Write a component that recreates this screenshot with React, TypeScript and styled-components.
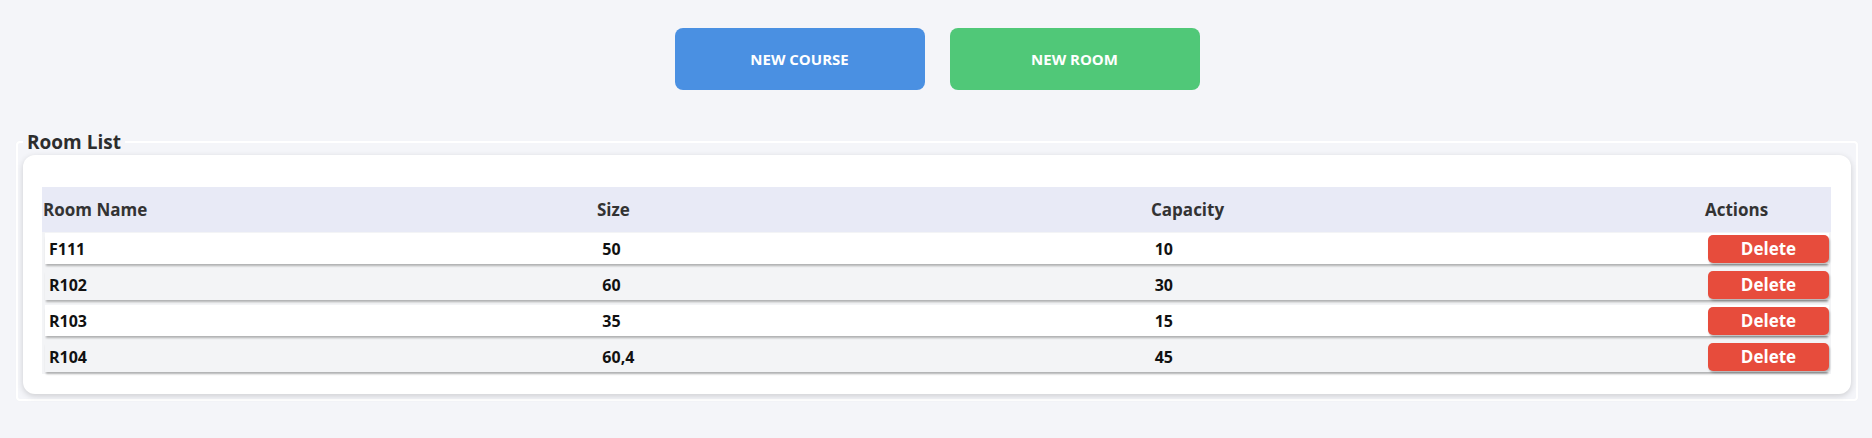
import styled, { createGlobalStyle } from "styled-components";

/**
 * Types
 */
type Room = {
  name: string;
  size: string;
  capacity: number;
};

const rooms: Room[] = [
  { name: "F111", size: "50", capacity: 10 },
  { name: "R102", size: "60", capacity: 30 },
  { name: "R103", size: "35", capacity: 15 },
  { name: "R104", size: "60,4", capacity: 45 },
];

/**
 * Styled
 */
const GlobalStyle = createGlobalStyle`
  html, body {
    margin: 0;
    background: #f4f5f9;
    font-family: "Open Sans", "Noto Sans", sans-serif;
  }
`;

const Page = styled.div`
  padding: 0 14px 40px 16px;
`;

const ButtonBar = styled.div`
  display: flex;
  justify-content: center;
  gap: 25px;
  padding-top: 28px;
`;

const ActionButton = styled.button<{ $color: string }>`
  width: 250px;
  height: 62px;
  border: none;
  border-radius: 8px;
  background: ${(p) => p.$color};
  color: #fff;
  font-family: inherit;
  font-size: 15px;
  font-weight: 700;
  text-transform: uppercase;
  cursor: pointer;
`;

const Fieldset = styled.fieldset`
  margin: 40px 0 0;
  padding: 1px 5px 5px;
  min-width: 0;
  border: 2px solid #fff;
  border-radius: 4px;
  box-shadow: 0 0 1px rgba(0, 0, 0, 0.06);
`;

const Legend = styled.legend`
  padding: 0 4px;
  font-size: 19px;
  line-height: 24px;
  font-weight: 700;
  color: #2d2d2d;
`;

const Card = styled.div`
  background: #fff;
  border-radius: 12px;
  box-shadow: 0 2px 6px rgba(0, 0, 0, 0.16);
  padding: 32px 20px 20px 19px;
`;

const Table = styled.div`
  width: 100%;
`;

const HeaderRow = styled.div`
  display: grid;
  grid-template-columns: 1fr 1fr 1fr 127px;
  align-items: center;
  height: 45px;
  background: #e8eaf6;
`;

const HeadCell = styled.div`
  padding-left: 1px;
  font-size: 17px;
  font-weight: 700;
  color: #333;
`;

const Body = styled.div`
  background: #f3f4f6;
  padding: 1px 2px 2px 3px;
  display: flex;
  flex-direction: column;
  gap: 5px;
`;

const Row = styled.div<{ $striped: boolean }>`
  display: grid;
  grid-template-columns: 1fr 1fr 1fr 127px;
  align-items: center;
  height: 31px;
  background: ${(p) => (p.$striped ? "#f3f4f6" : "#fff")};
  box-shadow: 0 3px 2px -1px rgba(0, 0, 0, 0.28);
`;

const Cell = styled.div`
  padding-left: 4px;
  font-size: 16px;
  font-weight: 700;
  color: #111;

  &:not(:first-child) {
    padding-left: 5px;
  }
`;

const ActionCell = styled.div`
  display: flex;
  justify-content: flex-end;
`;

const DeleteButton = styled.button`
  width: 121px;
  height: 28px;
  border: none;
  border-radius: 5px;
  background: #e74c3c;
  color: #fff;
  font-family: inherit;
  font-size: 17px;
  font-weight: 700;
  box-shadow: 1px 2px 2px rgba(0, 0, 0, 0.25);
  cursor: pointer;
`;

/**
 * Room list page with the two creation buttons on top.
 */
const App = () => {
  return (
    <Page>
      <GlobalStyle />
      <ButtonBar>
        <ActionButton $color="#4a90e2">New Course</ActionButton>
        <ActionButton $color="#50c878">New Room</ActionButton>
      </ButtonBar>
      <Fieldset>
        <Legend>Room List</Legend>
        <Card>
          <Table>
            <HeaderRow>
              <HeadCell>Room Name</HeadCell>
              <HeadCell>Size</HeadCell>
              <HeadCell>Capacity</HeadCell>
              <HeadCell>Actions</HeadCell>
            </HeaderRow>
            <Body>
              {rooms.map((room, i) => (
                <Row key={room.name} $striped={i % 2 === 1}>
                  <Cell>{room.name}</Cell>
                  <Cell>{room.size}</Cell>
                  <Cell>{room.capacity}</Cell>
                  <ActionCell>
                    <DeleteButton type="button">Delete</DeleteButton>
                  </ActionCell>
                </Row>
              ))}
            </Body>
          </Table>
        </Card>
      </Fieldset>
    </Page>
  );
};

export default App;
